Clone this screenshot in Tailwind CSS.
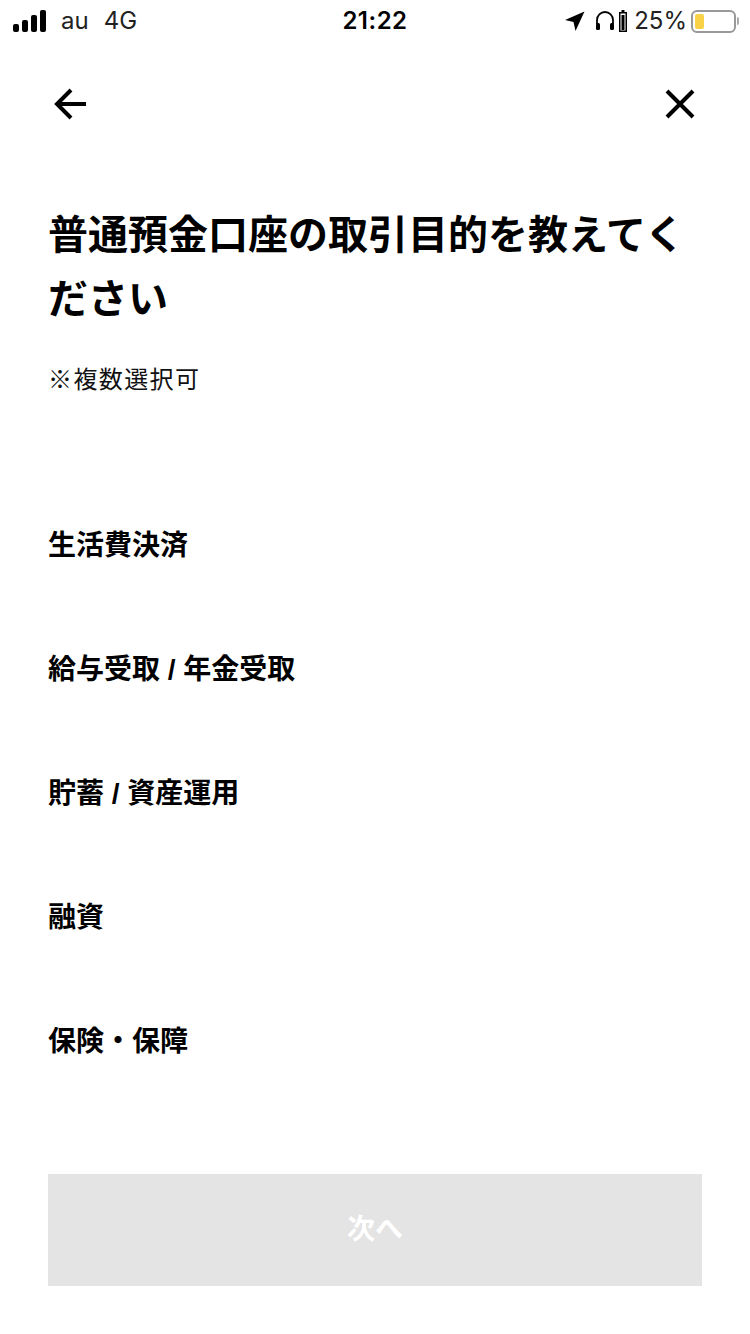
<!DOCTYPE html>
<html lang="ja">
<head>
    <meta charset="UTF-8">
    <meta name="viewport" content="width=device-width, initial-scale=1.0">
    <title>取引目的</title>
    <script src="https://cdn.jsdelivr.net/npm/@tailwindcss/browser@4"></script>
</head>
<body class="bg-white font-['Liberation_Sans','Noto_Sans_CJK_JP',sans-serif] text-black">
    <div class="w-[750px] h-[1334px] flex flex-col overflow-hidden">
        <!-- Status bar -->
        <div class="h-[42px] pl-[13px] pr-[11px] flex items-center justify-between font-['Inter','Liberation_Sans',sans-serif] text-[24px] leading-none">
            <div class="w-[260px] flex items-center">
                <svg width="34" height="22" viewBox="0 0 34 22" fill="#000">
                    <rect x="0" y="14" width="6" height="8" rx="2"/>
                    <rect x="9" y="10" width="6" height="12" rx="2"/>
                    <rect x="18" y="5" width="6" height="17" rx="2"/>
                    <rect x="27" y="0" width="6" height="22" rx="2"/>
                </svg>
                <span class="ml-[14px] text-[#222]">au</span>
                <span class="ml-[15px] text-[#222]">4G</span>
            </div>
            <div class="font-semibold tracking-[0.5px] mr-[2px]">21:22</div>
            <div class="w-[260px] flex items-center justify-end">
                <svg width="20" height="20" viewBox="0 0 20 20" fill="#000"><path d="M19.5 0.5 L0 9 L8.5 11 L10.5 20 Z"/></svg>
                <svg class="ml-[10px]" width="20" height="20" viewBox="0 0 20 20" fill="none">
                    <path d="M2 13 V9 a8 8 0 0 1 16 0 V13" stroke="#000" stroke-width="1.8"/>
                    <rect x="1" y="12" width="4" height="7" rx="1.5" fill="#000"/>
                    <rect x="15" y="12" width="4" height="7" rx="1.5" fill="#000"/>
                </svg>
                <svg class="ml-[4px]" width="8" height="22" viewBox="0 0 8 22" fill="none">
                    <rect x="2.5" y="0" width="3" height="2" fill="#000"/>
                    <rect x="0.75" y="2.75" width="6.5" height="18.5" stroke="#000" stroke-width="1.5"/>
                    <rect x="2.5" y="5" width="3" height="15" fill="#000"/>
                </svg>
                <span class="ml-[7px] text-[#222]">25%</span>
                <div class="ml-[4px] flex items-center">
                    <div class="w-[45px] h-[23px] rounded-[6px] border-2 border-[#999] p-[2px] flex">
                        <div class="w-[9px] rounded-[2px] bg-[#f9d247]"></div>
                    </div>
                    <div class="ml-[1px] w-[2px] h-[8px] rounded-r bg-[#aaa]"></div>
                </div>
            </div>
        </div>

        <!-- Nav -->
        <div class="h-[48px] mt-[38px] pl-[53px] pr-[55px] flex items-center justify-between">
            <svg width="34" height="32" viewBox="0 0 34 32" fill="none" stroke="#000" stroke-width="4">
                <path d="M33 16 H4"/>
                <path d="M18 2 L4 16 L18 30"/>
            </svg>
            <svg width="30" height="30" viewBox="0 0 30 30" fill="none" stroke="#000" stroke-width="4">
                <path d="M2 2 L28 28 M28 2 L2 28"/>
            </svg>
        </div>

        <!-- Heading -->
        <div class="px-[48px] mt-[75px]">
            <h1 class="text-[40px] leading-[64px] font-bold">普通預金口座の取引目的を教えてください</h1>
            <p class="mt-[31px] text-[24px] leading-[36px] tracking-[1.4px] text-[#111]">※複数選択可</p>
        </div>

        <!-- Options -->
        <div class="px-[48px] mt-[128px] flex flex-col gap-[84px] text-[28px] leading-[40px] font-bold">
            <div>生活費決済</div>
            <div>給与受取 / 年金受取</div>
            <div>貯蓄 / 資産運用</div>
            <div>融資</div>
            <div>保険・保障</div>
        </div>

        <!-- Next button -->
        <div class="px-[48px] mt-[112px]">
            <button class="w-full h-[112px] bg-[#e4e4e4] text-white text-[28px] font-bold flex items-center justify-center">次へ</button>
        </div>
    </div>
</body>
</html>
